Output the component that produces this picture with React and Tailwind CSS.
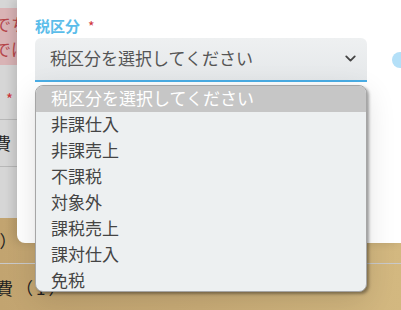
import { ChevronDown } from 'lucide-react'

const options = ['非課仕入', '非課売上', '不課税', '対象外', '課税売上', '課対仕入', '免税']

export default function App() {
  return (
    <div className="relative w-[401px] h-[310px] overflow-hidden bg-[#d6d6d6] font-['Noto_Sans_CJK_JP','Noto_Sans',sans-serif]">
      {/* 背景のページ（モーダルの裏） */}
      <div className="flex flex-col h-full text-[17px] leading-none">
        <div className="h-[8px]" />
        <div className="h-[57px] bg-[#d9b3b5] text-[#b5454a] flex flex-col justify-center gap-[8px] -ml-[6px]">
          <span>でちら</span>
          <span>ではな</span>
        </div>
        <div className="h-[54px] pt-[26px] pl-[6px] text-[#d0343a] text-[15px]">*</div>
        <div className="h-px bg-[#b8b8b8]" />
        <div className="h-[47px] flex items-center -ml-[6px] text-[#222]">費</div>
        <div className="h-px bg-[#b8b8b8]" />
        <div className="h-[51px]" />
        <div className="flex-1 bg-gradient-to-r from-[#c2a470] via-[#c9ac77] to-[#d3b880] flex flex-col text-[#222]">
          <div className="h-[45px] flex items-center -ml-[10px]">1）</div>
          <div className="h-px bg-[#c9c9c9]" />
          <div className="h-[46px] flex items-center -ml-[4px] tracking-[3px]">費（1）</div>
        </div>
      </div>

      {/* モーダル */}
      <div className="absolute left-[17px] top-0 right-0 h-[243px] bg-white rounded-bl-lg shadow-[-4px_0_10px_rgba(0,0,0,0.12)]">
        <div className="absolute left-[375px] top-[52px] w-4 h-4 rounded-full bg-[#b4e0f8]" />
        <div className="pl-[18px] pt-[15px] w-[350px]">
          <div className="flex items-baseline h-[21px]">
            <span className="text-[15px] font-bold text-[#5bbdea]">税区分</span>
            <span className="ml-[8px] text-[14px] text-[#d0343a]">*</span>
          </div>
          <div className="relative mt-[2px]">
            <div className="h-[44px] flex items-center justify-between pl-[15px] pr-[8px] pb-[2px] rounded-t-md bg-gradient-to-b from-[#eef0f1] to-[#e5e8ea] border-b-2 border-[#4aaee6] text-[17px] text-[#555]">
              <span>税区分を選択してください</span>
              <ChevronDown size={17} strokeWidth={2.6} className="text-[#444]" />
            </div>

            {/* ドロップダウン */}
            <div className="absolute left-0 top-[47px] w-[332px] h-[207px] overflow-hidden rounded-lg bg-[#edf0f1] border border-[#a6a6a6] shadow-[2px_2px_3px_rgba(0,0,0,0.35),0_8px_30px_rgba(0,0,0,0.12)] text-[17px] leading-none">
              <div className="h-[26px] flex items-center pl-[15px] pb-[3px] bg-[#c6c6c6] text-white">税区分を選択してください</div>
              {options.map(o => (
                <div key={o} className="h-[26px] flex items-center pl-[15px] pb-[3px] text-[#444]">{o}</div>
              ))}
            </div>
          </div>
        </div>
      </div>
    </div>
  )
}
